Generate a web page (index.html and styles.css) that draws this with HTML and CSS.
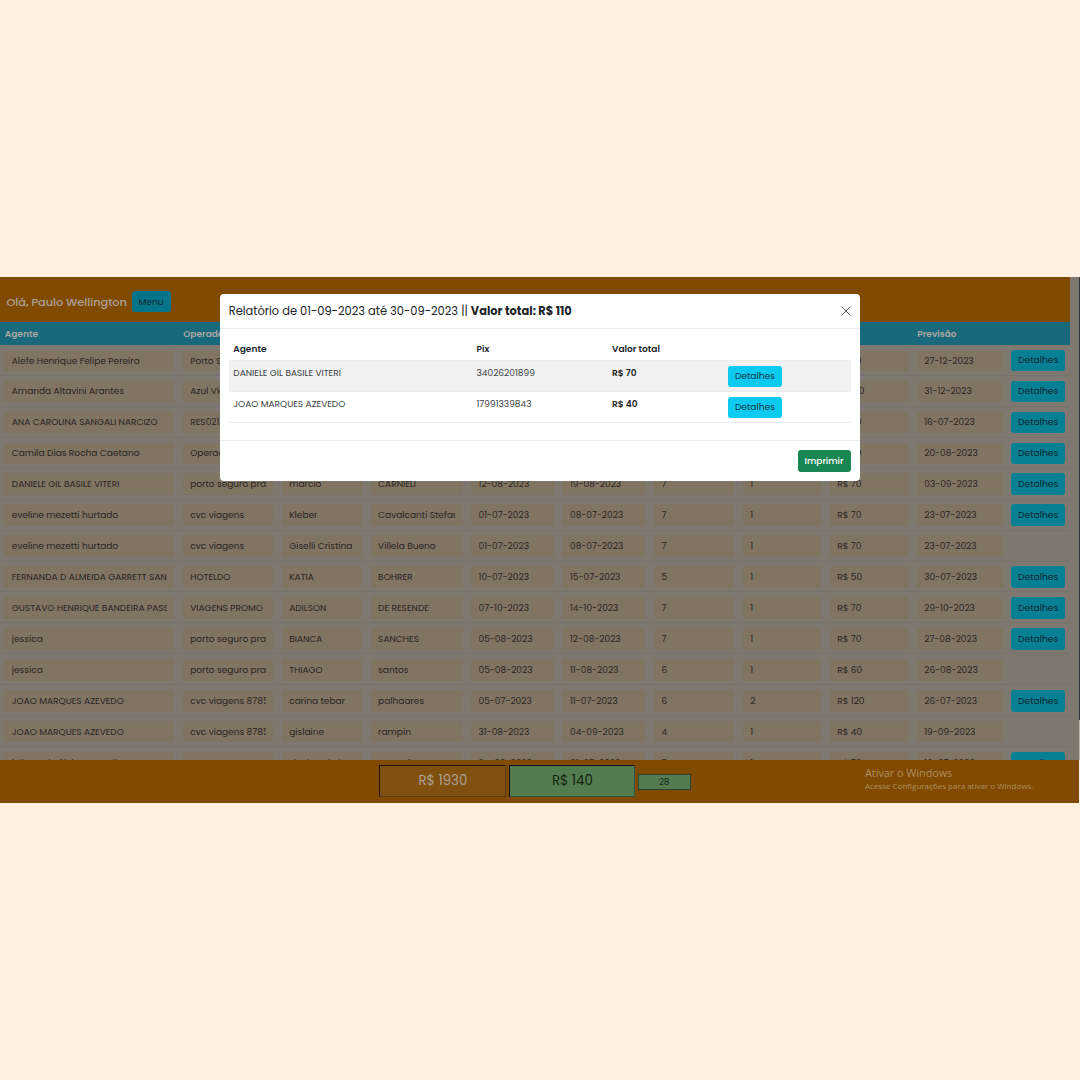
FILE: index.html
```html
<!DOCTYPE html>
<html lang="pt-BR">
<head>
<meta charset="utf-8">
<title>Relatório</title>
<link rel="stylesheet" href="styles.css">
</head>
<body>
<div class="screen">
  <div class="view">
    <main class="app">
      <header class="topbar"><span class="hello">Olá, Paulo Wellington</span><button class="btn menu">Menu</button></header>
      <div class="row head"><b>Agente</b><b>Operadora</b><b></b><b></b><b></b><b></b><b></b><b></b><b></b><b>Previsão</b></div>
      <div class="rows" id="rows"></div>
    </main>
    <div class="scrollbar"><i class="thumb"></i></div>
  </div>
  <footer class="totals">
    <output class="total">R$ 1930</output><output class="total green">R$ 140</output><output class="count">28</output>
    <div class="watermark"><p class="wm-title">Ativar o Windows</p><p class="wm-text">Acesse Configurações para ativar o Windows.</p></div>
  </footer>
  <section class="modal">
    <div class="modal-head"><h1>Relatório de 01-09-2023 até 30-09-2023 || <b>Valor total: R$ 110</b></h1>
      <svg class="close" viewBox="0 0 10 10"><path d="M.6.6 9.4 9.4M9.4.6.6 9.4"/></svg></div>
    <div class="modal-body">
      <div class="line titles"><b>Agente</b><b>Pix</b><b>Valor total</b></div>
      <div class="line odd"><span>DANIELE GIL BASILE VITERI</span><span>34026201899</span><b>R$ 70</b><button class="btn bright">Detalhes</button></div>
      <div class="line"><span>JOAO MARQUES AZEVEDO</span><span>17991339843</span><b>R$ 40</b><button class="btn bright">Detalhes</button></div>
    </div>
    <div class="modal-foot"><button class="btn print">Imprimir</button></div>
  </section>
</div>
<script src="rows.js"></script>
</body>
</html>
```
FILE: styles.css
```css
* { box-sizing: border-box; }
body { margin: 0; height: 1080px; overflow: hidden; background: #fef1e1; font: 9.02px/14px Poppins, Inter, sans-serif; color: #2a2623; padding-top: 277px; }
.screen { position: relative; width: 1079px; height: 526px; background: #7f7871; display: flex; flex-direction: column; }
.view { flex: 1; min-height: 0; display: flex; width: 1080px; }
.app { width: 1069.5px; display: flex; flex-direction: column; }
.topbar { height: 45.4px; flex: none; background: #804b00; display: flex; align-items: center; padding: 4px 6px 0 6.5px; gap: 5px; }
.hello { width: 120px; font-size: 11.3px; font-weight: 500; color: #aaa197; white-space: nowrap; padding-top: 1px; letter-spacing: -.02px; }
.btn { border: 0; border-radius: 3px; height: 21.5px; width: 54px; padding: 0; font: inherit; font-size: 9.15px; background: #078094; color: #072630; flex: none; }
.menu { width: 39px; background: #06758a; }
.row { display: grid; grid-template-columns: 170px 90.5px 80.5px 92px 83px 83px 80.5px 78.5px 78.5px 86px 54px; column-gap: 8.45px; padding-left: 4.3px; align-items: center; }
.head { height: 22.6px; flex: none; background: #17697b; color: #a9a7a2; }
.head b { font-weight: 600; padding-left: .5px; }
.rows { flex: 1; min-height: 0; overflow: hidden; }
.rows .row { height: 30.95px; border-bottom: 1px solid #78726c; padding-top: 1px; }
.field { height: 21.5px; border-radius: 3px; background: #80745f; background: #807462; padding: 3.8px 7.5px 0; }
.field span { display: block; overflow: hidden; white-space: nowrap; }
.totals { position: relative; height: 43px; flex: none; background: #804b00; display: flex; align-items: center; gap: 3px; padding-left: 379.4px; }
.total { width: 127px; height: 32px; border: 1px solid #5c3a14; border-top: 1.5px solid #241500; border-left-color: #241500; background: #80500f; color: #aaa194; font-size: 13.3px; display: grid; place-items: center; margin-top: -2px; }
.total.green { width: 126px; background: #547c51; color: #10240f; border-color: #111 #36533f #36533f #111; }
.count { width: 53px; height: 16px; border: 1px solid #29452d; background: #547c51; color: #172b17; display: grid; place-items: center; margin: 1px 0 0 -.8px; }
.watermark { position: absolute; left: 865px; top: 4px; font-family: "Open Sans", sans-serif; color: #b08c62; white-space: nowrap; }
.watermark p { margin: 0; }
.wm-title { font-size: 10.8px; line-height: 17px; }
.wm-text { font-size: 8px; line-height: 10px; }
.scrollbar { width: 10.5px; background: #7f7871; border-right: 1px solid #bdb5aa; }
.thumb { display: block; width: 10.5px; height: 443px; border-right: 1px solid #34363a; }
.modal { position: absolute; left: 220px; top: 17px; width: 639.5px; height: 187px; border-radius: 4px; background: #fff; color: #212529; }
.modal-head { height: 35.4px; border-bottom: 1px solid #e9ecef; display: flex; align-items: center; justify-content: space-between; padding: 0 8.5px 0 8.7px; }
h1 { margin: 0; font-size: 11.45px; font-weight: 400; white-space: nowrap; }
.close { width: 10px; height: 10px; stroke: #666; stroke-width: 1; fill: none; }
.modal-body { height: 112.1px; padding: 9px 9px 0; border-bottom: 1px solid #e9ecef; }
.line { height: 31px; display: grid; grid-template-columns: 243.2px 135.5px 116px 54px; padding: 4.2px 4.3px 0; border-bottom: 1px solid #e9ebed; }
.line b { font-weight: 600; }
.line span { color: #3b3e42; }
.titles { height: 23px; padding-top: 3.8px; }
.odd { background: #f1f1f1; }
.bright { background: #0dcaf0; color: #073844; }
.modal-foot { height: 39px; display: flex; align-items: center; justify-content: flex-end; padding-right: 9px; }
.print { width: 53px; background: #198754; color: #fff; font-weight: 500; font-size: 9px; }
```
FILE: rows.js
```js
const data = [
  "Alefe Henrique Felipe Pereira|Porto Seguro|||||||R$ 70|27-12-2023|1",
  "Amanda Altavini Arantes|Azul Viagens|||||||R$ 120|31-12-2023|1",
  "ANA CAROLINA SANGALI NARCIZO|RES021|||||||R$ 70|16-07-2023|1",
  "Camila Dias Rocha Caetano|Operadora|||||||R$ 70|20-08-2023|1",
  "DANIELE GIL BASILE VITERI|porto seguro pra|marcio|CARNIELI|12-08-2023|19-08-2023|7|1|R$ 70|03-09-2023|1",
  "eveline mezetti hurtado|cvc viagens|Kleber|Cavalcanti Stefani|01-07-2023|08-07-2023|7|1|R$ 70|23-07-2023|1",
  "eveline mezetti hurtado|cvc viagens|Giselli Cristina|Villela Bueno|01-07-2023|08-07-2023|7|1|R$ 70|23-07-2023|",
  "FERNANDA D ALMEIDA GARRETT SAN|HOTELDO|KATIA|BOHRER|10-07-2023|15-07-2023|5|1|R$ 50|30-07-2023|1",
  "GUSTAVO HENRIQUE BANDEIRA PASSOS|VIAGENS PROMO|ADILSON|DE RESENDE|07-10-2023|14-10-2023|7|1|R$ 70|29-10-2023|1",
  "jessica|porto seguro pra|BIANCA|SANCHES|05-08-2023|12-08-2023|7|1|R$ 70|27-08-2023|1",
  "jessica|porto seguro pra|THIAGO|santos|05-08-2023|11-08-2023|6|1|R$ 60|26-08-2023|",
  "JOAO MARQUES AZEVEDO|cvc viagens 8785|carina tebar|palhaares|05-07-2023|11-07-2023|6|2|R$ 120|26-07-2023|1",
  "JOAO MARQUES AZEVEDO|cvc viagens 8785|gislaine|rampin|31-08-2023|04-09-2023|4|1|R$ 40|19-09-2023|",
  "juliana da fátima arauji|CVC VIAGENS|Flavia Cristina|Semtello|24-06-2023|01-07-2023|7|1|R$ 70|16-07-2023|1"
];
document.getElementById("rows").innerHTML = data.map(r => {
  const c = r.split("|"), more = c.pop();
  return '<div class="row">' + c.map(t => `<div class="field"><span>${t}</span></div>`).join("") +
    (more ? '<button class="btn">Detalhes</button>' : "") + "</div>";
}).join("");
```
